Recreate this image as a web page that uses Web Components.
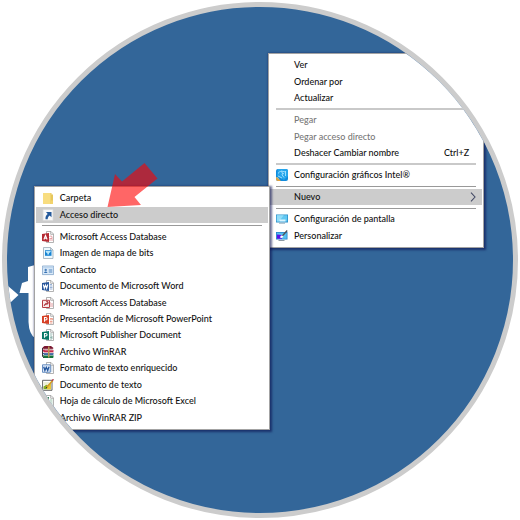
<!DOCTYPE html>
<html lang="es">
<head>
<meta charset="utf-8">
<title>Nuevo acceso directo</title>
<style>
  body { margin: 0; background: #fff; font-family: Lato, "Open Sans", sans-serif; }
</style>
</head>
<body>
<round-desktop>
  <context-menu class="main" label="Escritorio">
    <menu-row>Ver</menu-row>
    <menu-row>Ordenar por</menu-row>
    <menu-row>Actualizar</menu-row>
    <menu-line soft></menu-line>
    <menu-row disabled>Pegar</menu-row>
    <menu-row disabled>Pegar acceso directo</menu-row>
    <menu-row shortcut="Ctrl+Z">Deshacer Cambiar nombre</menu-row>
    <menu-line soft></menu-line>
    <menu-row icon="intel">Configuración gráficos Intel®</menu-row>
    <menu-line></menu-line>
    <menu-row active submenu>Nuevo</menu-row>
    <menu-line></menu-line>
    <menu-row icon="display">Configuración de pantalla</menu-row>
    <menu-row icon="personalize">Personalizar</menu-row>
  </context-menu>
  <context-menu class="sub" label="Nuevo">
    <menu-row icon="folder">Carpeta</menu-row>
    <menu-row icon="shortcut" active>Acceso directo</menu-row>
    <menu-line></menu-line>
    <menu-row icon="access">Microsoft Access Database</menu-row>
    <menu-row icon="bitmap">Imagen de mapa de bits</menu-row>
    <menu-row icon="contact">Contacto</menu-row>
    <menu-row icon="word">Documento de Microsoft Word</menu-row>
    <menu-row icon="accessOld">Microsoft Access Database</menu-row>
    <menu-row icon="powerpoint">Presentación de Microsoft PowerPoint</menu-row>
    <menu-row icon="publisher">Microsoft Publisher Document</menu-row>
    <menu-row icon="rar">Archivo WinRAR</menu-row>
    <menu-row icon="rtf">Formato de texto enriquecido</menu-row>
    <menu-row icon="text">Documento de texto</menu-row>
    <menu-row icon="excel">Hoja de cálculo de Microsoft Excel</menu-row>
    <menu-row icon="rar">Archivo WinRAR ZIP</menu-row>
  </context-menu>
</round-desktop>
<script>
// Page with a folded corner, shared by the Office file types.
const sheet = (ink) => `
  <path d="M4.5.5h4.500l2.500 2.500v8.500h-7z" fill="#fff" stroke="#a0a0a0" stroke-width=".8"/>
  <path d="M8.700.5v2.800h2.800" fill="none" stroke="#a0a0a0" stroke-width=".8"/>
  <g fill="none" stroke="${ink}" stroke-width=".8">`;
const letters = {
  A: 'M1.900 8.500 3.500 4.500 5.100 8.500M2.400 7.200h2.200',
  W: 'M1.300 4.500 2.300 8.300 3.500 5 4.700 8.300 5.700 4.500',
  P: 'M2.500 8.700V4.500h1.300a1.200 1.200 0 0 1 0 2.500H2.500',
  X: 'M2 4.500 5 8.500M5 4.500 2 8.500'
};
const office = (color, glyph, ink, detail) => sheet(ink) + `<path d="${detail}"/></g>
  <path d="M0 3 7 2v9L0 10z" fill="${color}"/>
  <path d="${letters[glyph]}" fill="none" stroke="#fff" stroke-width="1.100"/>`;

const icons = {
  intel: `<rect width="12" height="12" rx="2" fill="#118bdc"/>
    <path d="M2 0h8a2 2 0 0 1 2 2v5L8 11 1 7z" fill="#25a5ec"/>
    <path d="M2.500 4.500a2 2 0 1 1 3.500 1.300L8 8.500M5 2l4.500 1M9.500 2v5M2 7l4 2M8 4.500 6.500 5" fill="none" stroke="#a9e3ff" stroke-width=".9"/>
    <path d="M0 8v2a2 2 0 0 0 2 2h3z" fill="#e7a23c"/><path d="M0 8l2 .5L4 11z" fill="#f4dc83"/>`,
  display: `<path d="M0 1.500h12v8H0z" fill="#2c8fca"/><path d="M.8 2.300h10.400v6.200H.8z" fill="#62c8f2"/>
    <path d="M.8 2.300h7L3 8.500H.8z" fill="#91dcf8"/><path d="M3.500 6.500h6v2h-6z" fill="#d9f5ff"/>
    <path d="M3 10.200h6" stroke="#8aa7b8" stroke-width=".9"/>`,
  personalize: `<path d="M0 2h11.500v7.500H0z" fill="#2583c9"/><path d="M.8 2.800h9.900v5.900H.8z" fill="#55bff0"/>
    <path d="M1 4.500 6 5v3.700H1z" fill="#5a10e8"/><path d="M4.200 7.800C4 5.700 5.500 5 7.300 5.300 7.400 7.500 6 8.300 4.200 7.800z" fill="#fff"/>
    <path d="M6.500 5.700 11.200.5" stroke="#4b5157" stroke-width="1.300"/><path d="M2.500 10.500h6" stroke="#8d99a3"/>`,
  folder: `<path d="M1 1h8.500v1.500H11V12H1z" fill="#e6c65c"/><path d="M1 1h7.500v11H1z" fill="#f8dd80"/>
    <path d="M9 8.500h2V12H9z" fill="#f3d36c"/>`,
  shortcut: `<path d="M1 .5h10v11H1z" fill="#f8f8f8" stroke="#d9d9d9" stroke-width=".8"/>
    <path d="M4 3h5.500v5.300L7.700 6.600C6.400 7.500 5.800 8.500 5.700 10.300H3.500C3.200 8 4 6.300 5.700 4.900z" fill="#24599b"/>`,
  access: office('#b52b34', 'A', '#e08b90', 'M7.500 5.500q1.500-1 2.500 0v4.500M7.500 7.500h2.500M8 10V8'),
  accessOld: sheet('#d98488') + `<path d="M8 5v5M10 6v4"/></g>
    <path d="M.5 3.300h7v7.200h-7z" fill="#f9e9e8" stroke="#b63c43"/>
    <path d="M2 8.700l2.500-2.500M4 6.700a1.200 1.200 0 1 0 .3-1.900" fill="none" stroke="#a9262f" stroke-width="1.200"/>`,
  bitmap: `<path d="M1.500.5h7l2.500 2.500v8.500H1.500z" fill="#eef8fd" stroke="#9aabb7" stroke-width=".8"/>
    <path d="M8.500.5V3H11" fill="none" stroke="#9aabb7" stroke-width=".8"/>
    <path d="M3 3.300h6.500v5.500H3z" fill="#1683d2"/><path d="M3.500 4h5.500L8 5.500l-1 .5v1.500H5.300V6L4 5.500z" fill="#b7e6fb"/>`,
  contact: `<path d="M.4 2h11.200v8.600H.4z" fill="#dbeaf8" stroke="#7fa1c6" stroke-width=".8"/>
    <path d="M.8 2.400h10.400v1.800H.8z" fill="#bed6ee"/><circle cx="3.700" cy="6" r="1.200" fill="#4f83bd"/>
    <path d="M1.800 9q1.900-2.800 3.800 0z" fill="#3973b4"/><path d="M6.800 6h3.500M6.800 8h3.500" stroke="#3e78b5" stroke-width=".9"/>`,
  word: office('#28569b', 'W', '#7e9dc9', 'M7.800 4.500H10M7.800 6H10.500M7.800 7.500H10.500M7.800 9H10.500'),
  powerpoint: office('#d63f24', 'P', '#e88a75', 'M8 5.500h2.500v1.300H8M8 8.500h2.500M8 10h2.500'),
  publisher: office('#087a67', 'P', '#80aaa2', 'M8 5h2.500M8 7h2v3H8M10 8.500H8'),
  excel: office('#217346', 'X', '#7fb294', 'M8 5h2.500M8 7h2.500M8 9h2.500'),
  rar: `<path d="M.5 1.500 2.500 0H9l2.500 2-1 1.500H2z" fill="#7a1730"/><path d="M2.200 3.200H11.500" stroke="#e4cbd1" stroke-width=".7"/>
    <path d="M.3 4 1.700 3.500 3 4.300h8.700l-.5 2.500H2.200z" fill="#c52d4b"/><path d="M2 6.500h9.500" stroke="#f2d2d6" stroke-width=".7"/>
    <path d="M.3 6.500l2 .7h9.400L11.200 9h-9z" fill="#1c4a8d"/><path d="M2 9.200h9.500" stroke="#dce6f2" stroke-width=".7"/>
    <path d="M.3 9l2 .6h9.400L11.200 12H2z" fill="#14733a"/>
    <path d="M6 .5h1.500v11H6z" fill="#b99554"/><path d="M.5 2v8.500L2 12" fill="none" stroke="#282028" stroke-width=".9"/>`,
  rtf: sheet('#93a9c7') + `<path d="M8.500 5h2M8.500 7h2M8.500 9h2"/></g>
    <path d="M.5 2.800h7.800v7.500H.5z" fill="#dfeaf8" stroke="#5a83ba" stroke-width=".9"/>
    <path d="M1.700 4.700 2.900 8.500 4.300 5.300 5.700 8.500 7 4.700" fill="none" stroke="#23559d" stroke-width="1.300"/>`,
  text: `<path d="M.6 1.300h9.400v10H.6z" fill="#fff" stroke="#555" stroke-width=".9"/>
    <path d="M1.500 3h6v3h-6z" fill="#edf0d7"/><path d="M1.500 10.300V7.500L4.300 5.700 9 8.300v2z" fill="#85ad24"/>
    <path d="M5 7.500 9 4v6.300H5z" fill="#e9c636"/><path d="M4.500 8.500 10.700 1.500" stroke="#d49b22" stroke-width="1.600"/>
    <path d="M10 1.800 11.500.3" stroke="#b1384a" stroke-width="1.500"/><path d="M4 9.200l1-1.200" stroke="#333"/>`
};

class MenuRow extends HTMLElement {
  connectedCallback() {
    const root = this.attachShadow({ mode: 'open' });
    const icon = icons[this.getAttribute('icon')] || '';
    const key = this.getAttribute('shortcut');
    root.innerHTML = `
      <style>
        :host { display: flex; flex: 3 1 0; min-height: 0; }
        button {
          flex: 1; min-width: 0; display: grid; grid-template-columns: 12px 1fr auto;
          align-items: center; column-gap: 6px; padding: 0 6px; border: 0;
          background: transparent; color: #111; text-align: left;
          font: 500 9px/12px Lato, "Open Sans", sans-serif; white-space: nowrap;
        }
        :host([active]) button { background: #ccc; }
        button:disabled { color: #777; }
        svg { display: block; }
        kbd { font: inherit; padding-right: 7px; }
      </style>
      <button type="button" role="menuitem"${this.hasAttribute('disabled') ? ' disabled' : ''}>
        <svg width="12" height="12" viewBox="0 0 12 12" aria-hidden="true">${icon}</svg>
        <span><slot></slot></span>
        ${key ? `<kbd>${key}</kbd>` : ''}
        ${this.hasAttribute('submenu') ? `<svg width="6" height="10" viewBox="0 0 6 10" aria-hidden="true"><path d="M1 .7 5 5 1 9.300" fill="none" stroke="#444a66" stroke-width="1.100"/></svg>` : ''}
      </button>`;
  }
}

class MenuLine extends HTMLElement {
  connectedCallback() {
    this.attachShadow({ mode: 'open' }).innerHTML = `
      <style>
        :host { display: flex; flex: 1 1 0; min-height: 0; align-items: center; padding: 0 6px; }
        hr { flex: 1; height: 1px; margin: 0; border: 0; background: #999; }
        :host([soft]) hr { height: 2px; background: #c9c9c9; }
      </style><hr>`;
  }
}

class ContextMenu extends HTMLElement {
  connectedCallback() {
    this.attachShadow({ mode: 'open' }).innerHTML = `
      <style>
        :host {
          display: flex; box-sizing: border-box; background: #fff;
          border: 1px solid #a3a3a3; padding: 3px 1px;
          box-shadow: 1px 1px 2px 1px rgba(10, 15, 80, .6);
        }
        nav { flex: 1; min-width: 0; display: flex; flex-direction: column; }
      </style>
      <nav role="menu" aria-label="${this.getAttribute('label')}"><slot></slot></nav>`;
  }
}

class RoundDesktop extends HTMLElement {
  connectedCallback() {
    this.attachShadow({ mode: 'open' }).innerHTML = `
      <style>
        :host { display: block; padding: 2px; }
        main {
          position: relative; box-sizing: border-box; aspect-ratio: 1; overflow: hidden;
          border: 5px solid #ccc; border-radius: 50%; background: #336699;
        }
        svg { position: absolute; inset: 0; width: 100%; height: 100%; pointer-events: none; }
        ::slotted(.main) { position: absolute; left: 51.6%; top: 9.1%; width: 42.7%; height: 38.5%; }
        ::slotted(.sub) { position: absolute; left: 5.3%; top: 35.4%; width: 46.6%; height: 48.2%; }
      </style>
      <main>
        <svg viewBox="7 7 506 506" aria-hidden="true">
          <path d="M5 284 8 286 18.500 295 11 302 5 303z" fill="#fff"/>
          <path d="M28 267 35 265V338Q29 334 28.500 322V293H19.500L22 283 28 281z" fill="#fff"/>
        </svg>
        <slot></slot>
        <svg viewBox="7 7 506 506" aria-hidden="true">
          <path d="M107.500 207 115 174 122 181.500 144.500 163 157.500 178.500 134.500 197 141 205z" fill="#f00" fill-opacity=".6"/>
        </svg>
      </main>`;
  }
}

customElements.define('menu-row', MenuRow);
customElements.define('menu-line', MenuLine);
customElements.define('context-menu', ContextMenu);
customElements.define('round-desktop', RoundDesktop);
</script>
</body>
</html>
